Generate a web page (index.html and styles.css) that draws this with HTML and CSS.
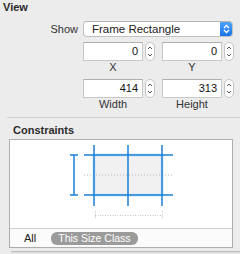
FILE: index.html
```html
<!DOCTYPE html>
<html lang="en">
<head>
    <meta charset="UTF-8">
    <meta name="viewport" content="width=device-width, initial-scale=1.0">
    <title>Size Inspector</title>
    <link rel="stylesheet" href="styles.css">
</head>
<body>
    <div class="panel">
        <div class="head">View</div>

        <div class="show-row">
            <span class="lbl">Show</span>
            <div class="popup">
                <span class="popup-text">Frame Rectangle</span>
                <span class="popup-arrows">
                    <svg width="7" height="10" viewBox="0 0 7 10">
                        <path d="M1 4 L3.5 1.5 L6 4 M1 6 L3.5 8.5 L6 6" fill="none" stroke="#fff" stroke-width="1.3"/>
                    </svg>
                </span>
            </div>
        </div>

        <div class="fields">
            <div class="group">
                <div class="field-line">
                    <div class="field">0</div>
                    <div class="stepper">
                        <svg width="10" height="19" viewBox="0 0 10 19">
                            <path d="M3 7 L5 5 L7 7 M3 12 L5 14 L7 12" fill="none" stroke="#555" stroke-width="1"/>
                        </svg>
                    </div>
                </div>
                <div class="cap">X</div>
            </div>
            <div class="group">
                <div class="field-line">
                    <div class="field">0</div>
                    <div class="stepper">
                        <svg width="10" height="19" viewBox="0 0 10 19">
                            <path d="M3 7 L5 5 L7 7 M3 12 L5 14 L7 12" fill="none" stroke="#555" stroke-width="1"/>
                        </svg>
                    </div>
                </div>
                <div class="cap">Y</div>
            </div>
        </div>

        <div class="fields fields-2">
            <div class="group">
                <div class="field-line">
                    <div class="field">414</div>
                    <div class="stepper">
                        <svg width="10" height="19" viewBox="0 0 10 19">
                            <path d="M3 7 L5 5 L7 7 M3 12 L5 14 L7 12" fill="none" stroke="#555" stroke-width="1"/>
                        </svg>
                    </div>
                </div>
                <div class="cap">Width</div>
            </div>
            <div class="group">
                <div class="field-line">
                    <div class="field">313</div>
                    <div class="stepper">
                        <svg width="10" height="19" viewBox="0 0 10 19">
                            <path d="M3 7 L5 5 L7 7 M3 12 L5 14 L7 12" fill="none" stroke="#555" stroke-width="1"/>
                        </svg>
                    </div>
                </div>
                <div class="cap">Height</div>
            </div>
        </div>

        <div class="sep"></div>

        <div class="head head-sub">Constraints</div>

        <div class="box">
            <svg class="diagram" width="222" height="88" viewBox="0 0 222 88">
                <rect x="84" y="15" width="68" height="40" fill="#f1f1f1" stroke="#cfe6fa" stroke-width="3"/>
                <line x1="74" y1="35" x2="163" y2="35" stroke="#b8b8b8" stroke-width="1" stroke-dasharray="1 2"/>
                <g stroke="#1a7fd6" stroke-width="1.5" fill="none">
                    <line x1="64" y1="15" x2="64" y2="55"/>
                    <line x1="60" y1="15" x2="68" y2="15"/>
                    <line x1="60" y1="55" x2="68" y2="55"/>
                    <line x1="74" y1="15" x2="163" y2="15"/>
                    <line x1="74" y1="55" x2="163" y2="55"/>
                    <line x1="84" y1="5" x2="84" y2="66"/>
                    <line x1="118" y1="5" x2="118" y2="66"/>
                    <line x1="152" y1="5" x2="152" y2="66"/>
                </g>
                <g stroke="#c4c4c4" stroke-width="1" stroke-dasharray="1 1.5" fill="none">
                    <line x1="85.5" y1="71" x2="85.5" y2="79"/>
                    <line x1="152.5" y1="71" x2="152.5" y2="79"/>
                    <line x1="85" y1="75.5" x2="153" y2="75.5"/>
                </g>
            </svg>
            <div class="seg">
                <span class="seg-all">All</span>
                <span class="pill">This Size Class</span>
            </div>
        </div>

        <div class="next"></div>
    </div>
</body>
</html>
```

FILE: styles.css
```css
* {
    margin: 0;
    padding: 0;
    box-sizing: border-box;
}

body {
    font-family: "Liberation Sans", Arial, sans-serif;
    font-size: 11px;
    line-height: 13px;
    color: #333;
    background: #ececec;
    width: 240px;
    height: 254px;
    overflow: hidden;
}

.panel {
    padding-top: 1px;
}

.head {
    font-weight: bold;
    color: #2b2b2b;
    padding-left: 3px;
    height: 13px;
}

.head-sub {
    padding-left: 13px;
    margin-top: 6px;
}

.show-row {
    display: flex;
    align-items: center;
    margin-top: 7px;
}

.lbl {
    width: 78px;
    text-align: right;
    margin-right: 5px;
}

.popup {
    width: 150px;
    height: 16px;
    display: flex;
    align-items: center;
    background: #fff;
    border: 1px solid #c2c2c2;
    border-top-color: #b5b5b5;
    border-radius: 4px;
    overflow: hidden;
}

.popup-text {
    flex: 1;
    padding-left: 8px;
    font-size: 11.5px;
    color: #222;
}

.popup-arrows {
    width: 12px;
    height: 100%;
    display: flex;
    align-items: center;
    justify-content: center;
    background: linear-gradient(#50a2f8, #1b73e8);
}

.fields {
    display: flex;
    margin-left: 83px;
    margin-top: 5px;
}

.fields-2 {
    margin-top: 5px;
}

.group + .group {
    margin-left: 7px;
}

.field-line {
    display: flex;
}

.field {
    width: 60px;
    height: 19px;
    background: #fff;
    border: 1px solid #c8c8c8;
    border-top-color: #b0b0b0;
    text-align: right;
    padding-right: 4px;
    line-height: 17px;
    color: #111;
}

.stepper {
    width: 10px;
    height: 19px;
    margin-left: 2px;
    background: #fff;
    border: 1px solid #c4c4c4;
    border-radius: 5px;
    display: flex;
    align-items: center;
    justify-content: center;
    overflow: hidden;
}

.stepper svg {
    flex-shrink: 0;
}

.cap {
    width: 60px;
    text-align: center;
    color: #333;
}

.sep {
    height: 1px;
    background: #d2d2d2;
    margin: 6px 0 0 7px;
}

.box {
    margin: 2px 0 0 9px;
    width: 224px;
    background: #fff;
    border: 1px solid #adadad;
}

.diagram {
    display: block;
}

.seg {
    display: flex;
    align-items: center;
    height: 19px;
    border-top: 1px solid #cfcfcf;
    background: #fbfbfb;
}

.seg-all {
    margin-left: 14px;
    color: #222;
}

.pill {
    margin-left: 15px;
    height: 13px;
    padding: 0 7px;
    background: #9b9b9b;
    color: #fff;
    border-radius: 6px;
    font-size: 10.5px;
    line-height: 13px;
}

.next {
    margin: 3px 0 0 11px;
    height: 4px;
    border-top: 1px solid #bdbdbd;
    background: #e2e2e2;
}
```
